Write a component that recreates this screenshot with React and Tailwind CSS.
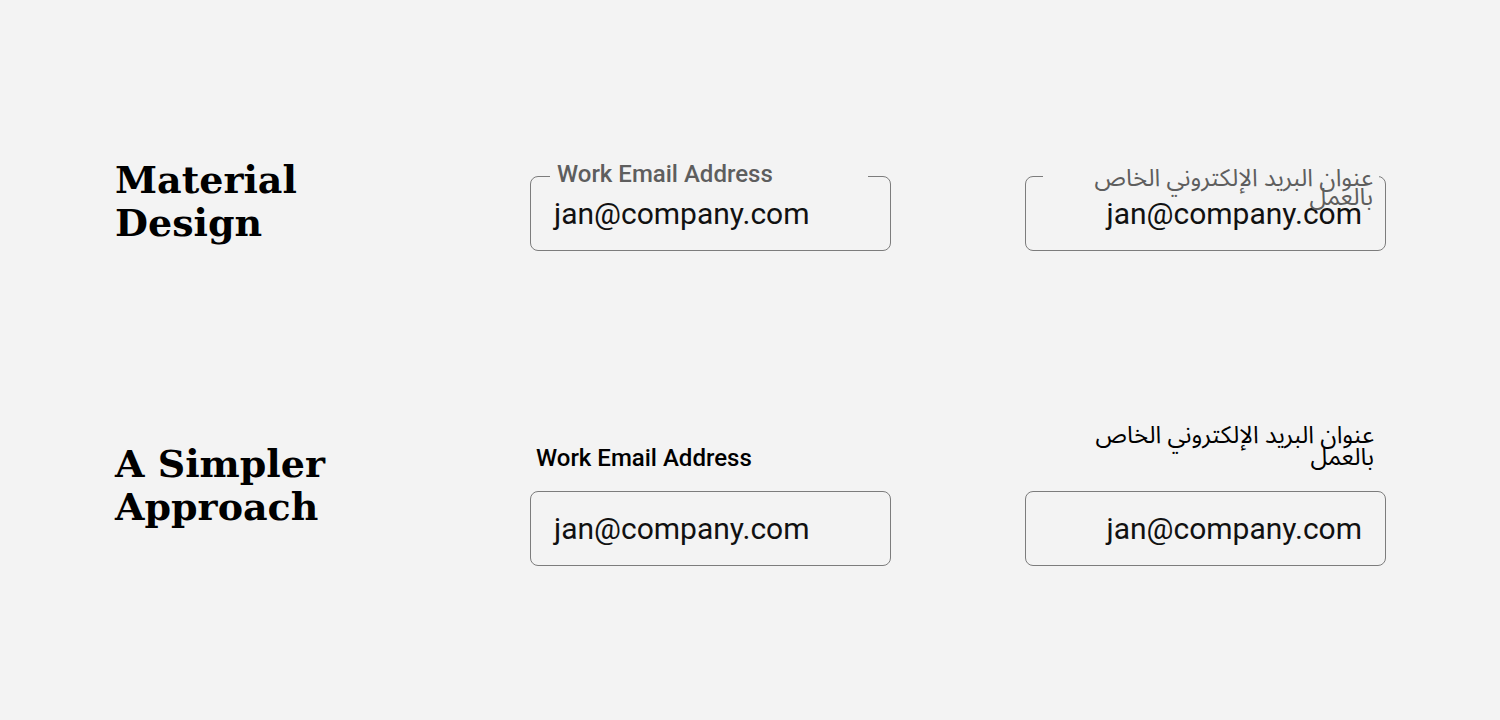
const serif = { fontFamily: '"DejaVu Serif", "Liberation Serif", serif' };
const sans = { fontFamily: 'Roboto, "Liberation Sans", sans-serif' };
const arabic = { fontFamily: '"Noto Sans Arabic", "Noto Sans", "DejaVu Sans", sans-serif' };

function Heading({ children }) {
  return (
    <h2 className="w-[415px] shrink-0 text-[38px] font-bold leading-[43px] text-black" style={serif}>
      {children}
    </h2>
  );
}

function Box({ rtl, children }) {
  return (
    <div
      dir={rtl ? 'rtl' : 'ltr'}
      className="relative flex h-[75px] w-[361px] items-center rounded-[8px] border border-[#7c7c7c] px-[23px]"
    >
      <span className="text-[30px] leading-[34px] text-[#111111]" style={sans}>
        jan@company.com
      </span>
      {children}
    </div>
  );
}

export default function App() {
  return (
    <div className="min-h-screen bg-[#f3f3f3] pl-[115px]">
      {/* Material outlined field */}
      <div className="flex items-start pt-[158px]">
        <Heading>
          Material
          <br />
          Design
        </Heading>
        <div className="mt-[18px]">
          <Box>
            <div className="absolute left-[19px] top-[-3px] h-[5px] w-[318px] bg-[#f3f3f3]" />
            <label
              className="absolute left-[26px] top-[-17px] text-[24px] font-medium leading-[28px] text-[#5e5e5e]"
              style={sans}
            >
              Work Email Address
            </label>
          </Box>
        </div>
        <div className="ml-[134px] mt-[18px]">
          <Box rtl>
            <div className="absolute left-[17px] right-[6px] top-[-3px] h-[5px] bg-[#f3f3f3]" />
            <label
              className="absolute right-[12px] top-[-8px] w-[300px] text-right text-[24px] leading-[19px] text-[#5e5e5e]"
              style={arabic}
            >
              عنوان البريد الإلكتروني الخاص بالعمل
            </label>
          </Box>
        </div>
      </div>

      {/* Simple label above field */}
      <div className="mt-[171px] flex items-start">
        <div className="mt-[20px]">
          <Heading>
            A Simpler
            <br />
            Approach
          </Heading>
        </div>
        <div className="mt-[22px]">
          <label className="block pl-[6px] text-[24px] font-medium leading-[28px] text-black" style={sans}>
            Work Email Address
          </label>
          <div className="mt-[19px]">
            <Box />
          </div>
        </div>
        <div className="ml-[134px]">
          <div dir="rtl" className="mt-[3px] pr-[12px]">
            <label
              className="block w-[300px] text-right text-[24px] leading-[22px] text-black"
              style={arabic}
            >
              عنوان البريد الإلكتروني الخاص بالعمل
            </label>
          </div>
          <div className="mt-[22px]">
            <Box rtl />
          </div>
        </div>
      </div>
    </div>
  );
}
